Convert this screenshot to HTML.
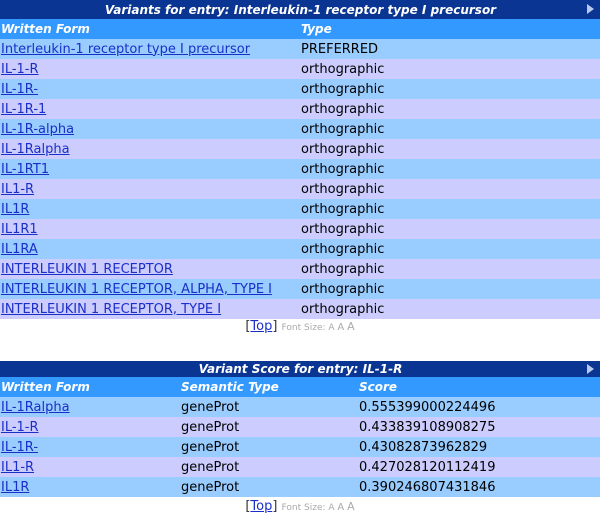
<!DOCTYPE html>
<html><head><style>
body{margin:0;background:#fff;font-family:"DejaVu Sans","Liberation Sans",sans-serif;font-size:13px;width:600px;height:522px;overflow:hidden;position:relative}
table{border-collapse:collapse;width:600px;position:absolute;left:0}
td{padding:0 0 0 1px;white-space:nowrap;height:20px}
.t td{background:#0a3593;color:#fff;font-weight:bold;font-style:italic;text-align:center;position:relative;font-size:12px}
.h td{background:#3399ff;color:#fff;font-weight:bold;font-style:italic;font-size:12px}
.a td{background:#99ccff}
.b td{background:#ccccff}
a{color:#1a2fc8;text-decoration:underline}
.arr{position:absolute;right:6px;top:4px;width:0;height:0;border-left:7px solid #b8c8ee;border-top:5px solid transparent;border-bottom:5px solid transparent}
.top{position:absolute;left:0;width:600px;text-align:center;font-size:13px;color:#333}
.top a{color:#1a2fc8}
.fs{font-size:9px;color:#aaa}
</style></head><body>
<table style="top:0">
<tr class="t"><td colspan="2" style="height:19px">Variants for entry: Interleukin-1 receptor type I precursor<span class="arr"></span></td></tr>
<tr class="h"><td style="width:299px;height:19px">Written Form</td><td>Type</td></tr>
<tr class="a"><td><a>Interleukin-1 receptor type I precursor</a></td><td>PREFERRED</td></tr>
<tr class="b"><td><a>IL-1-R</a></td><td>orthographic</td></tr>
<tr class="a"><td><a>IL-1R-</a></td><td>orthographic</td></tr>
<tr class="b"><td><a>IL-1R-1</a></td><td>orthographic</td></tr>
<tr class="a"><td><a>IL-1R-alpha</a></td><td>orthographic</td></tr>
<tr class="b"><td><a>IL-1Ralpha</a></td><td>orthographic</td></tr>
<tr class="a"><td><a>IL-1RT1</a></td><td>orthographic</td></tr>
<tr class="b"><td><a>IL1-R</a></td><td>orthographic</td></tr>
<tr class="a"><td><a>IL1R</a></td><td>orthographic</td></tr>
<tr class="b"><td><a>IL1R1</a></td><td>orthographic</td></tr>
<tr class="a"><td><a>IL1RA</a></td><td>orthographic</td></tr>
<tr class="b"><td><a>INTERLEUKIN 1 RECEPTOR</a></td><td>orthographic</td></tr>
<tr class="a"><td><a>INTERLEUKIN 1 RECEPTOR, ALPHA, TYPE I</a></td><td>orthographic</td></tr>
<tr class="b"><td><a>INTERLEUKIN 1 RECEPTOR, TYPE I</a></td><td>orthographic</td></tr>
</table>
<div class="top" style="top:319px">[<a>Top</a>] <span class="fs">Font Size: <span style="font-size:9px">A</span> <span style="font-size:10px">A</span> <span style="font-size:11px">A</span></span></div>
<table style="top:361px">
<tr class="t"><td colspan="3" style="height:16px">Variant Score for entry: IL-1-R<span class="arr" style="top:3px"></span></td></tr>
<tr class="h"><td style="width:179px;height:17px">Written Form</td><td style="width:177px">Semantic Type</td><td>Score</td></tr>
<tr class="a"><td><a>IL-1Ralpha</a></td><td>geneProt</td><td>0.555399000224496</td></tr>
<tr class="b"><td><a>IL-1-R</a></td><td>geneProt</td><td>0.433839108908275</td></tr>
<tr class="a"><td><a>IL-1R-</a></td><td>geneProt</td><td>0.43082873962829</td></tr>
<tr class="b"><td><a>IL1-R</a></td><td>geneProt</td><td>0.427028120112419</td></tr>
<tr class="a"><td><a>IL1R</a></td><td>geneProt</td><td>0.390246807431846</td></tr>
</table>
<div class="top" style="top:499px">[<a>Top</a>] <span class="fs">Font Size: <span style="font-size:9px">A</span> <span style="font-size:10px">A</span> <span style="font-size:11px">A</span></span></div>
</body></html>
